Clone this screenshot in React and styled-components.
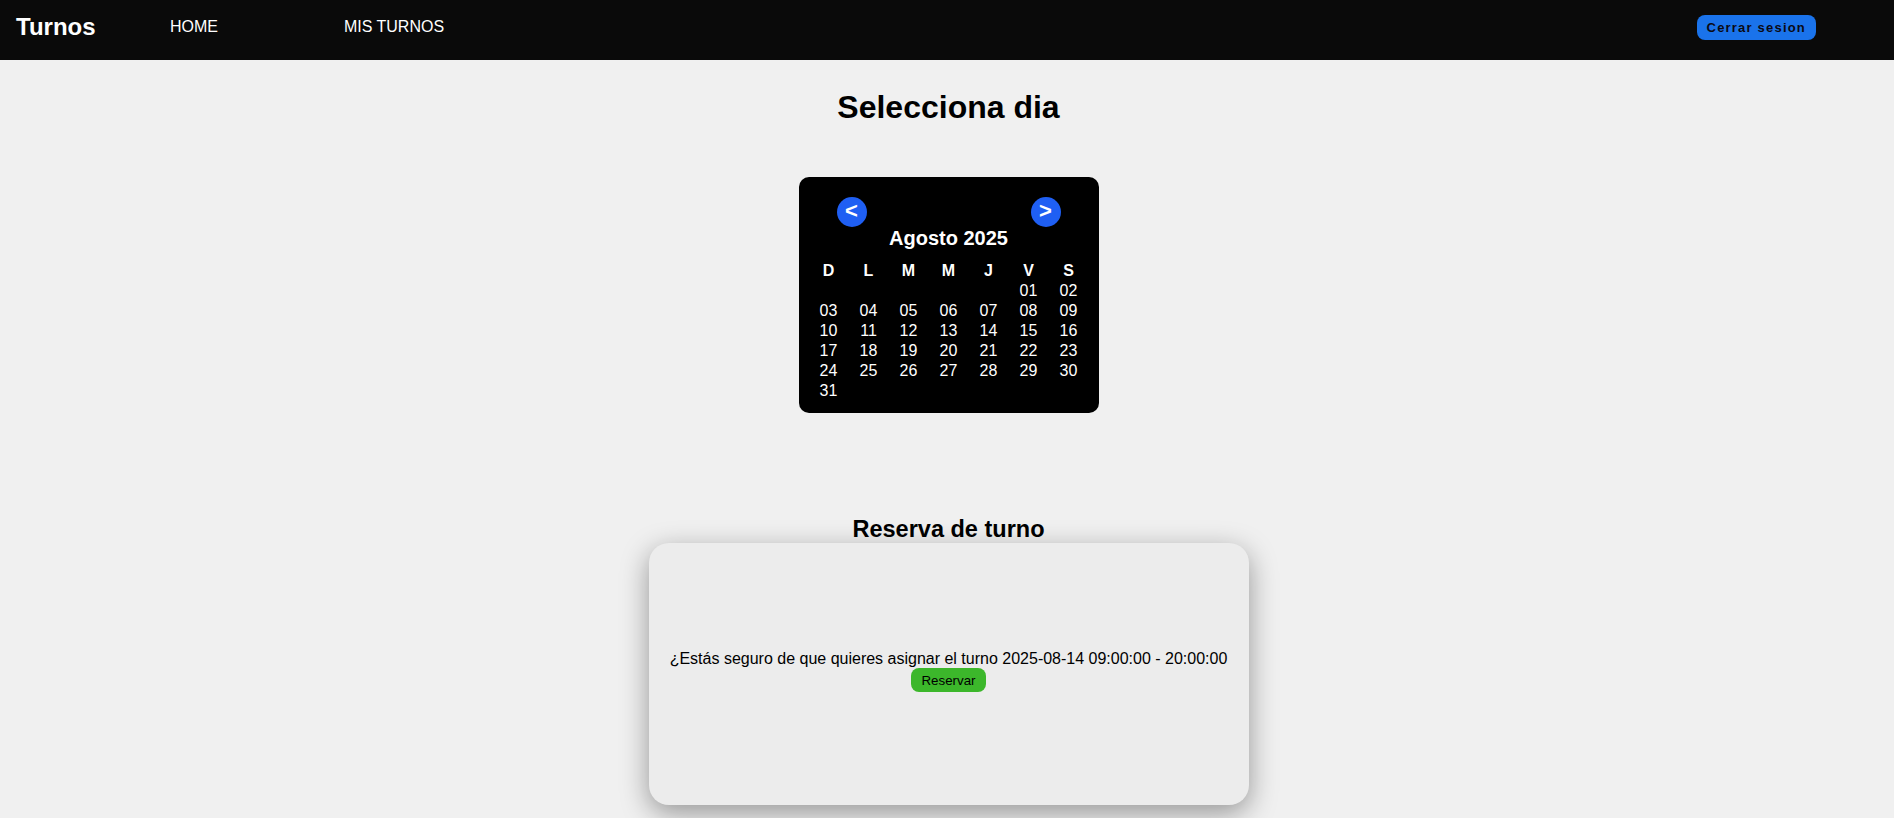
import styled, { createGlobalStyle } from "styled-components";

const GlobalStyle = createGlobalStyle`
  body {
    margin: 0;
    background-color: #f0f0f0;
    font-family: "Liberation Sans", Arial, sans-serif;
    color: #000;
  }
`;

const NavBar = styled.nav`
  display: flex;
  align-items: center;
  height: 60px;
  padding: 0 78px 6px 16px;
  box-sizing: border-box;
  background-color: #0a0a0a;
`;

const Brand = styled.span`
  width: 78px;
  color: #fff;
  font-size: 24px;
  font-weight: bold;
`;

const NavLink = styled.a`
  width: 200px;
  color: #fff;
  font-size: 16px;
  text-align: center;
  text-decoration: none;
`;

const LogoutButton = styled.button`
  margin-left: auto;
  height: 25px;
  padding: 0 10px;
  border: none;
  border-radius: 8px;
  background-color: #1a73eb;
  color: #0a0a14;
  font-family: "Liberation Sans", Arial, sans-serif;
  font-size: 13px;
  font-weight: bold;
  letter-spacing: 1.2px;
`;

const Main = styled.main`
  display: flex;
  flex-direction: column;
  align-items: center;
  padding-left: 3px;
`;

const Title = styled.h1`
  margin: 29px 0 0;
  font-size: 32px;
  line-height: 37px;
`;

const Calendar = styled.div`
  width: 300px;
  margin-top: 51px;
  padding: 20px 10px 12px;
  box-sizing: border-box;
  border-radius: 10px;
  background-color: #000;
  color: #fff;
`;

const CalendarNav = styled.div`
  display: flex;
  justify-content: space-between;
  padding: 0 28px;
`;

const ArrowButton = styled.button`
  width: 30px;
  height: 30px;
  padding: 0 0 2px;
  border: none;
  border-radius: 50%;
  background-color: #1f5ff3;
  color: #fff;
  font-family: "Liberation Sans", Arial, sans-serif;
  font-size: 22px;
  font-weight: bold;
  line-height: 1;
`;

const MonthTitle = styled.div`
  text-align: center;
  font-size: 20px;
  font-weight: bold;
  line-height: 23px;
`;

const DayGrid = styled.div`
  display: grid;
  grid-template-columns: repeat(7, 40px);
  grid-auto-rows: 20px;
  margin-top: 11px;
`;

const DayCell = styled.div`
  text-align: center;
  font-size: 16px;
  line-height: 20px;
  font-weight: ${(props) => (props.$head ? "bold" : "normal")};
  cursor: ${(props) => (props.$head ? "default" : "pointer")};
`;

const Subtitle = styled.h2`
  margin: 102px 0 0;
  font-size: 23.5px;
  line-height: 28px;
`;

const Modal = styled.div`
  display: flex;
  flex-direction: column;
  align-items: center;
  justify-content: center;
  width: 600px;
  height: 262px;
  margin: 0 0 14px;
  padding-bottom: 6px;
  box-sizing: border-box;
  border-radius: 20px;
  background-color: #ececec;
  box-shadow: 0 8px 28px rgba(0, 0, 0, 0.38);
`;

const ModalText = styled.p`
  margin: 0;
  font-size: 16px;
  line-height: 18px;
`;

const ReserveButton = styled.button`
  height: 24px;
  padding: 0 10px;
  border: none;
  border-radius: 8px;
  background-color: #3cb72b;
  color: #000;
  font-family: "Liberation Sans", Arial, sans-serif;
  font-size: 13.33px;
`;

const weekDays = ["D", "L", "M", "M", "J", "V", "S"];
const pad = (n) => String(n).padStart(2, "0");

const App = () => {
  const firstWeekday = 5;
  const cells = [
    ...Array.from({ length: firstWeekday }, () => null),
    ...Array.from({ length: 31 }, (_, i) => i + 1),
  ];

  return (
    <>
      <GlobalStyle />
      <NavBar>
        <Brand>Turnos</Brand>
        <NavLink href="#">HOME</NavLink>
        <NavLink href="#">MIS TURNOS</NavLink>
        <LogoutButton>Cerrar sesion</LogoutButton>
      </NavBar>
      <Main>
        <Title>Selecciona dia</Title>
        <Calendar>
          <CalendarNav>
            <ArrowButton>&lt;</ArrowButton>
            <ArrowButton>&gt;</ArrowButton>
          </CalendarNav>
          <MonthTitle>Agosto 2025</MonthTitle>
          <DayGrid>
            {weekDays.map((d, i) => (
              <DayCell key={"h" + i} $head>
                {d}
              </DayCell>
            ))}
            {cells.map((day, i) => (
              <DayCell key={i}>{day ? pad(day) : ""}</DayCell>
            ))}
          </DayGrid>
        </Calendar>
        <Subtitle>Reserva de turno</Subtitle>
        <Modal>
          <ModalText>
            ¿Estás seguro de que quieres asignar el turno 2025-08-14 09:00:00 - 20:00:00
          </ModalText>
          <ReserveButton>Reservar</ReserveButton>
        </Modal>
      </Main>
    </>
  );
};

export default App;
